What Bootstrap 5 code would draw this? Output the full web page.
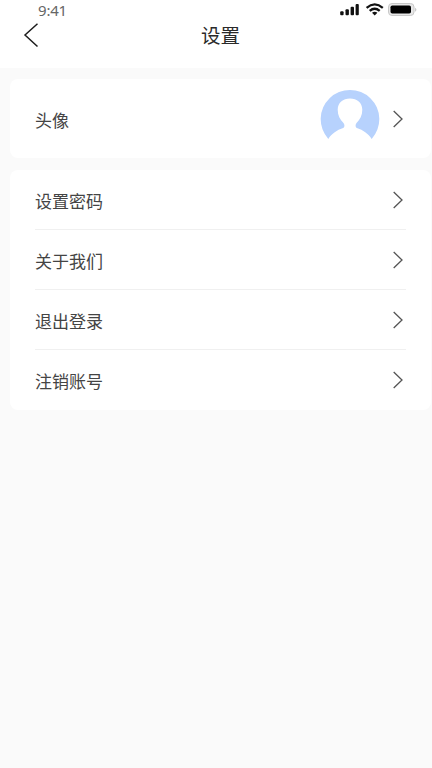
<!DOCTYPE html>
<html lang="zh-CN">
<head>
<meta charset="utf-8">
<meta name="viewport" content="width=device-width, initial-scale=1">
<title>设置</title>
<link href="https://cdn.jsdelivr.net/npm/bootstrap@5.3.0/dist/css/bootstrap.min.css" rel="stylesheet">
<style>
body{background:#fafafa;color:#444;font-family:"Noto Sans CJK SC",sans-serif;font-size:17px;line-height:24px;min-height:768px;overflow:hidden}
svg{display:block;flex:none}
.top-area{height:68px;background:#fff}
.status-row{height:19px;padding:0 14px 0 38px}
.clock{font-family:"Noto Sans",sans-serif;font-size:15px;line-height:20px;letter-spacing:-.2px;color:#666}
.title-row{height:32px;padding:0 14px 0 23px}
.title-row h1{font-size:19.5px;line-height:32px;color:#2a2a2a}
.side{width:16px}
.settings{padding:11px 1px 0 10px;gap:12px}
.panel{background:#fff;border-radius:8px;padding:0 25px 0 25px}
.panel span{padding-top:2px}
.avatar-row{height:79px;padding-right:3px}
.setting{height:60px;border-bottom:1px solid #f0f0f0;padding-right:3px}
.setting:last-child{border-bottom:0}
.avatar-gap{gap:13px}
</style>
</head>
<body>
<header class="top-area">
  <div class="status-row d-flex justify-content-between align-items-start">
    <span class="clock">9:41</span>
    <svg width="80" height="19" viewBox="0 0 80 19" aria-hidden="true">
      <g fill="#111"><rect x="2.200" y="11.300" width="3.400" height="4" rx="1"/><rect x="7.500" y="9.300" width="3.400" height="6" rx="1"/><rect x="12.600" y="6.800" width="3.400" height="8.500" rx="1"/><rect x="17.600" y="4.100" width="3.200" height="11.200" rx="1"/></g>
      <g fill="none" stroke="#111" stroke-width="2.300"><path d="M28.600 7.800Q36.700 1 44.800 7.800"/><path d="M31.700 10.900Q36.700 6.700 41.700 10.900"/></g>
      <path d="M34 12.700Q36.700 10.600 39.400 12.700L36.700 15.500Z" fill="#111"/>
      <rect x="50.500" y="3.500" width="25.500" height="12" rx="3.500" fill="#e8e8e8" stroke="#c8c8c8"/>
      <rect x="52.500" y="5.500" width="20.500" height="8" rx="1.800" fill="#000"/>
      <path d="M77.200 7.700Q79.600 9.700 77.200 11.700Z" fill="#bdbdbd"/>
    </svg>
  </div>
  <div class="title-row d-flex justify-content-between align-items-center">
    <svg class="side" width="16" height="26" viewBox="0 0 16 26" role="img" aria-label="返回"><path d="M14.500 1.700L2 13L14.500 24.500" fill="none" stroke="#1d1d1d" stroke-width="1.500"/></svg>
    <h1 class="m-0 fw-normal">设置</h1>
    <span class="side"></span>
  </div>
</header>
<main class="settings d-flex flex-column">
  <section class="panel">
    <div class="avatar-row d-flex justify-content-between align-items-center">
      <span>头像</span>
      <div class="d-flex align-items-center avatar-gap">
        <svg width="60" height="60" viewBox="0 -1.700 60 60" aria-hidden="true"><path d="M8.300 48.200A29.300 29.300 0 1 1 51.700 48.200C48.500 43 42.500 39 37.500 37.500C35.300 36.800 35 34.500 36.500 32.300C40 29 42.300 24.500 42.300 19C42.300 12 37 7.800 30 7.800S17.700 12 17.700 19C17.700 24.500 20 29 23.500 32.300C25 34.500 24.700 36.800 22.500 37.500C17.500 39 11.500 43 8.300 48.200Z" fill="#b7d2fd"/></svg>
        <svg width="10" height="18" viewBox="0 0 10 18" aria-hidden="true"><path d="M.7 1L9 9L.7 17" fill="none" stroke="#555" stroke-width="1.3"/></svg>
      </div>
    </div>
  </section>
  <section class="panel">
    <div class="setting d-flex justify-content-between align-items-center"><span>设置密码</span><svg width="10" height="18" viewBox="0 0 10 18" aria-hidden="true"><path d="M.7 1L9 9L.7 17" fill="none" stroke="#555" stroke-width="1.3"/></svg></div>
    <div class="setting d-flex justify-content-between align-items-center"><span>关于我们</span><svg width="10" height="18" viewBox="0 0 10 18" aria-hidden="true"><path d="M.7 1L9 9L.7 17" fill="none" stroke="#555" stroke-width="1.3"/></svg></div>
    <div class="setting d-flex justify-content-between align-items-center"><span>退出登录</span><svg width="10" height="18" viewBox="0 0 10 18" aria-hidden="true"><path d="M.7 1L9 9L.7 17" fill="none" stroke="#555" stroke-width="1.3"/></svg></div>
    <div class="setting d-flex justify-content-between align-items-center"><span>注销账号</span><svg width="10" height="18" viewBox="0 0 10 18" aria-hidden="true"><path d="M.7 1L9 9L.7 17" fill="none" stroke="#555" stroke-width="1.3"/></svg></div>
  </section>
</main>
<script src="https://cdn.jsdelivr.net/npm/bootstrap@5.3.0/dist/js/bootstrap.bundle.min.js"></script>
</body>
</html>
